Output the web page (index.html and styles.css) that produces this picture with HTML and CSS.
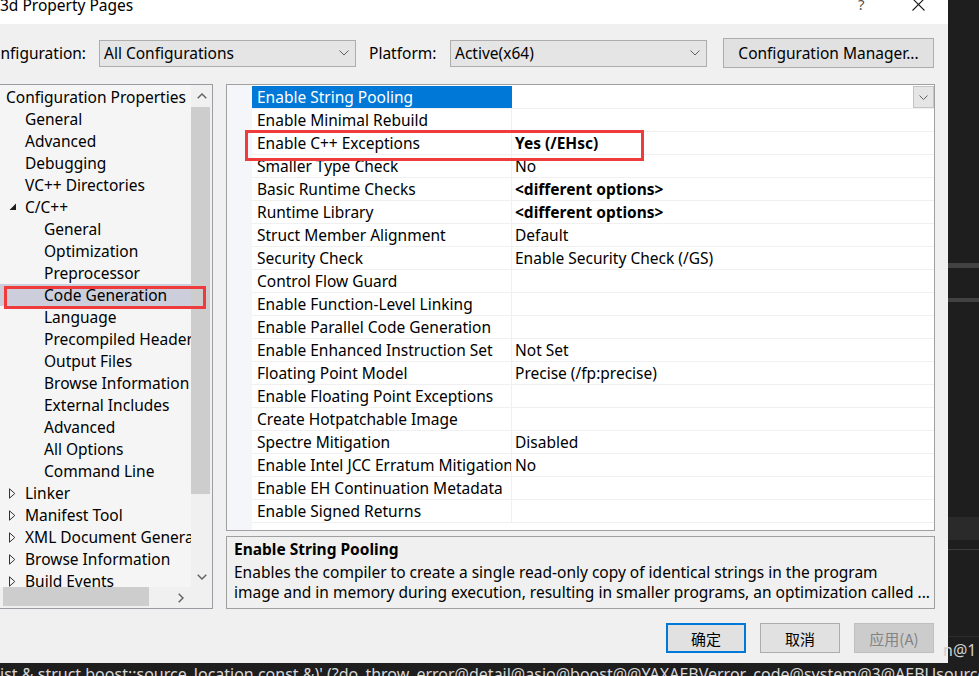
FILE: index.html
```html
<!DOCTYPE html>
<html>
<head>
<meta charset="utf-8">
<title>Property Pages</title>
<link rel="stylesheet" href="styles.css">
</head>
<body>
<div class="screen">
  <div class="dialog">
    <div class="titlebar">
      <span class="title">3d Property Pages</span>
      <span class="help">?</span>
      <svg class="close" width="13" height="13" viewBox="0 0 13 13"><path d="M0.5 0.5L12.5 12.5M12.5 0.5L0.5 12.5" stroke="#1a1a1a" stroke-width="1.1" fill="none"/></svg>
    </div>

    <div class="toolbar">
      <div class="lbl cfg-lbl">Configuration:</div>
      <div class="combo combo-cfg"><span>All Configurations</span><svg class="chev" width="10" height="6" viewBox="0 0 10 6"><path d="M0.5 0.5L5 5L9.5 0.5" fill="none" stroke="#606060"/></svg></div>
      <div class="lbl plat-lbl">Platform:</div>
      <div class="combo combo-plat"><span>Active(x64)</span><svg class="chev" width="10" height="6" viewBox="0 0 10 6"><path d="M0.5 0.5L5 5L9.5 0.5" fill="none" stroke="#606060"/></svg></div>
      <div class="btn btn-cm">Configuration Manager...</div>
    </div>

    <div class="main">
      <div class="tree">
        <div class="tree-body">
          <div class="tree-list">
            <div class="node l0">Configuration Properties</div>
            <div class="node l1"><span class="tw"></span>General</div>
            <div class="node l1"><span class="tw"></span>Advanced</div>
            <div class="node l1"><span class="tw"></span>Debugging</div>
            <div class="node l1"><span class="tw"></span>VC++ Directories</div>
            <div class="node l1"><span class="tw"><svg width="8" height="8" viewBox="0 0 8 8"><path d="M7 0.5L7 7L0.5 7Z" fill="#1e1e1e"/></svg></span>C/C++</div>
            <div class="node l2"><span class="tw"></span>General</div>
            <div class="node l2"><span class="tw"></span>Optimization</div>
            <div class="node l2"><span class="tw"></span>Preprocessor</div>
            <div class="node l2 sel"><span class="tw"></span>Code Generation</div>
            <div class="node l2"><span class="tw"></span>Language</div>
            <div class="node l2"><span class="tw"></span>Precompiled Headers</div>
            <div class="node l2"><span class="tw"></span>Output Files</div>
            <div class="node l2"><span class="tw"></span>Browse Information</div>
            <div class="node l2"><span class="tw"></span>External Includes</div>
            <div class="node l2"><span class="tw"></span>Advanced</div>
            <div class="node l2"><span class="tw"></span>All Options</div>
            <div class="node l2"><span class="tw"></span>Command Line</div>
            <div class="node l1"><span class="tw"><svg width="7" height="11" viewBox="0 0 7 11"><path d="M0.5 0.8L5.8 5.5L0.5 10.2Z" fill="none" stroke="#333"/></svg></span>Linker</div>
            <div class="node l1"><span class="tw"><svg width="7" height="11" viewBox="0 0 7 11"><path d="M0.5 0.8L5.8 5.5L0.5 10.2Z" fill="none" stroke="#333"/></svg></span>Manifest Tool</div>
            <div class="node l1"><span class="tw"><svg width="7" height="11" viewBox="0 0 7 11"><path d="M0.5 0.8L5.8 5.5L0.5 10.2Z" fill="none" stroke="#333"/></svg></span>XML Document Generator</div>
            <div class="node l1"><span class="tw"><svg width="7" height="11" viewBox="0 0 7 11"><path d="M0.5 0.8L5.8 5.5L0.5 10.2Z" fill="none" stroke="#333"/></svg></span>Browse Information</div>
            <div class="node l1"><span class="tw"><svg width="7" height="11" viewBox="0 0 7 11"><path d="M0.5 0.8L5.8 5.5L0.5 10.2Z" fill="none" stroke="#333"/></svg></span>Build Events</div>
          </div>
          <div class="vscroll">
            <div class="sarrow"><svg width="10" height="6" viewBox="0 0 10 6"><path d="M0.7 5.3L5 1L9.3 5.3" fill="none" stroke="#606060" stroke-width="1.4"/></svg></div>
            <div class="vthumb"></div>
            <div class="vtrack"></div>
            <div class="sarrow"><svg width="10" height="6" viewBox="0 0 10 6"><path d="M0.7 0.7L5 5L9.3 0.7" fill="none" stroke="#606060" stroke-width="1.4"/></svg></div>
          </div>
        </div>
        <div class="hscroll">
          <div class="hthumb"></div>
          <div class="htrack"></div>
          <div class="harrow"><svg width="6" height="10" viewBox="0 0 6 10"><path d="M0.7 0.7L5 5L0.7 9.3" fill="none" stroke="#606060" stroke-width="1.4"/></svg></div>
          <div class="corner"></div>
        </div>
        <div class="mark mark-tree"></div>
      </div>

      <div class="right">
        <div class="grid">
          <div class="gutter"></div>
          <div class="rows">
            <div class="row"><div class="name sel">Enable String Pooling</div><div class="val drop"><span class="dd"><svg width="9" height="5" viewBox="0 0 9 5"><path d="M0.5 0.5L4.5 4.5L8.5 0.5" fill="none" stroke="#606060"/></svg></span></div></div>
            <div class="row"><div class="name">Enable Minimal Rebuild</div><div class="val"></div></div>
            <div class="row"><div class="name">Enable C++ Exceptions</div><div class="val b">Yes (/EHsc)</div></div>
            <div class="row"><div class="name">Smaller Type Check</div><div class="val">No</div></div>
            <div class="row"><div class="name">Basic Runtime Checks</div><div class="val b">&lt;different options&gt;</div></div>
            <div class="row"><div class="name">Runtime Library</div><div class="val b">&lt;different options&gt;</div></div>
            <div class="row"><div class="name">Struct Member Alignment</div><div class="val">Default</div></div>
            <div class="row"><div class="name">Security Check</div><div class="val">Enable Security Check (/GS)</div></div>
            <div class="row"><div class="name">Control Flow Guard</div><div class="val"></div></div>
            <div class="row"><div class="name">Enable Function-Level Linking</div><div class="val"></div></div>
            <div class="row"><div class="name">Enable Parallel Code Generation</div><div class="val"></div></div>
            <div class="row"><div class="name">Enable Enhanced Instruction Set</div><div class="val">Not Set</div></div>
            <div class="row"><div class="name">Floating Point Model</div><div class="val">Precise (/fp:precise)</div></div>
            <div class="row"><div class="name">Enable Floating Point Exceptions</div><div class="val"></div></div>
            <div class="row"><div class="name">Create Hotpatchable Image</div><div class="val"></div></div>
            <div class="row"><div class="name">Spectre Mitigation</div><div class="val">Disabled</div></div>
            <div class="row"><div class="name">Enable Intel JCC Erratum Mitigation</div><div class="val">No</div></div>
            <div class="row"><div class="name">Enable EH Continuation Metadata</div><div class="val"></div></div>
            <div class="row"><div class="name">Enable Signed Returns</div><div class="val"></div></div>
          </div>
          <div class="mark mark-grid"></div>
        </div>
        <div class="desc">
          <div class="desc-title">Enable String Pooling</div>
          <div class="desc-line">Enables the compiler to create a single read-only copy of identical strings in the program</div>
          <div class="desc-line">image and in memory during execution, resulting in smaller programs, an optimization called ...</div>
        </div>
      </div>
    </div>

    <div class="buttons">
      <div class="btn dlg default">确定</div>
      <div class="btn dlg">取消</div>
      <div class="btn dlg disabled">应用(A)</div>
    </div>
  </div>

  <div class="side">
    <div class="sp sp1"></div>
    <div class="sl sl-a"></div>
    <div class="sp sp2"></div>
    <div class="sl sl-b"></div>
    <div class="sp sp3"></div>
    <div class="sband"></div>
    <div class="sp sp4"></div>
    <div class="sl sl-c"></div>
    <div class="sp sp5"></div>
    <div class="sl sl-d"></div>
    <div class="sp sp6"></div>
    <div class="side-text">n@1</div>
  </div>

  <div class="console">ist &amp;,struct boost::source_location const &amp;)' (?do_throw_error@detail@asio@boost@@YAXAEBVerror_code@system@3@AEBUsource_location@boost@@@Z)</div>
</div>
</body>
</html>
```

FILE: styles.css
```css
* { box-sizing: border-box; margin: 0; padding: 0; }

html, body {
  width: 979px;
  height: 676px;
  overflow: hidden;
  background: #1e1e1e;
}

body {
  font-family: "Noto Sans", "Noto Sans CJK SC", sans-serif;
  font-size: 15.5px;
  color: #000;
}

.screen {
  display: grid;
  grid-template-columns: 948px 31px;
  grid-template-rows: 663px 13px;
  width: 979px;
  height: 676px;
  overflow: hidden;
}

/* ---------- dialog ---------- */
.dialog {
  grid-column: 1;
  grid-row: 1;
  background: #f0f0f0;
  display: flex;
  flex-direction: column;
  overflow: hidden;
}

.titlebar {
  height: 24px;
  flex: 0 0 24px;
  background: #fff;
  display: flex;
  align-items: flex-start;
  padding-right: 23px;
}

.title {
  font-size: 15.5px;
  line-height: 15px;
  margin-top: -2px;
  white-space: nowrap;
  color: #000;
}

.help {
  margin-left: auto;
  font-size: 15px;
  line-height: 15px;
  margin-top: -3px;
  color: #555;
  width: 8px;
}

.close {
  margin-left: 46px;
  margin-top: -2px;
}

.toolbar {
  height: 44px;
  flex: 0 0 44px;
  padding-top: 14px;
  display: flex;
  align-items: center;
}

.lbl {
  white-space: nowrap;
  display: flex;
  justify-content: flex-end;
  line-height: 20px;
}

.cfg-lbl { width: 86px; }

.plat-lbl {
  margin-left: 13px;
  width: 71px;
  justify-content: flex-start;
}

.combo {
  height: 27px;
  width: 257px;
  background: #e5e5e5;
  border: 1px solid #adadad;
  display: flex;
  align-items: center;
  padding: 0 6px 0 4px;
  white-space: nowrap;
}

.combo span { flex: 1; }

.combo-cfg { margin-left: 13px; }
.combo-plat { margin-left: 10px; }

.chev { flex: 0 0 auto; }

.btn {
  background: #e1e1e1;
  border: 1px solid #adadad;
  display: flex;
  align-items: center;
  justify-content: center;
  white-space: nowrap;
}

.btn-cm {
  margin-left: 16px;
  width: 211px;
  height: 30px;
}

/* ---------- main area ---------- */
.main {
  flex: 0 0 525px;
  height: 525px;
  margin-top: 16px;
  display: flex;
}

.tree {
  position: relative;
  margin-left: -2px;
  width: 215px;
  height: 525px;
  border: 1px solid #9a9ca2;
  background: #f5f5f5;
  display: flex;
  flex-direction: column;
}

.tree-body {
  height: 502px;
  display: flex;
}

.tree-list {
  width: 192px;
  height: 502px;
  overflow: hidden;
  padding-top: 1px;
  background: #f5f5f5;
}

.node {
  height: 22px;
  line-height: 22px;
  white-space: nowrap;
  display: flex;
  align-items: center;
}

.node.l0 { padding-left: 7px; }
.node.l1 { padding-left: 7px; }
.node.l2 { padding-left: 26px; }
.node.sel { background: #cccedb; }

.tw {
  flex: 0 0 19px;
  width: 19px;
  height: 22px;
  display: flex;
  align-items: center;
  padding-left: 3px;
}

.vscroll {
  width: 21px;
  height: 502px;
  background: #f0f0f0;
  display: flex;
  flex-direction: column;
}

.sarrow {
  height: 21px;
  flex: 0 0 21px;
  display: flex;
  align-items: center;
  justify-content: center;
}

.vthumb {
  margin-top: 1px;
  height: 387px;
  width: 19px;
  background: #cdcdcd;
}

.vtrack { flex: 1; }

.hscroll {
  height: 21px;
  display: flex;
  background: #f0f0f0;
}

.hthumb {
  margin-left: 4px;
  margin-top: 0;
  width: 146px;
  height: 19px;
  background: #cdcdcd;
}

.htrack { flex: 1; }

.harrow {
  width: 21px;
  display: flex;
  align-items: center;
  justify-content: center;
}

.corner {
  width: 21px;
  background: #f0f0f0;
}

.mark {
  position: absolute;
  border: 3px solid #ef3b3b;
  pointer-events: none;
}

.mark-tree {
  left: 5px;
  top: 201px;
  width: 202px;
  height: 23px;
}

.right {
  margin-left: 13px;
  width: 709px;
  display: flex;
  flex-direction: column;
}

.grid {
  position: relative;
  height: 447px;
  border: 1px solid #a0a0a0;
  background: #fff;
  display: flex;
  padding-top: 1px;
}

.gutter {
  width: 25px;
  background: #f4f6f9;
  margin-top: -1px;
}

.rows {
  flex: 1;
}

.row {
  display: grid;
  grid-template-columns: 260px 1fr;
  height: 23px;
  border-bottom: 1px solid #f0f0f0;
}

.name {
  padding-left: 5px;
  line-height: 22px;
  white-space: nowrap;
  overflow: hidden;
  border-right: 1px solid #f0f0f0;
}

.name.sel {
  background: #0078d7;
  color: #fff;
  border-right-color: #0078d7;
}

.val {
  padding-left: 3px;
  line-height: 22px;
  white-space: nowrap;
  overflow: hidden;
}

.val.b { font-weight: bold; }

.val.drop {
  display: flex;
  justify-content: flex-end;
  padding: 0;
}

.dd {
  width: 21px;
  height: 22px;
  background: #e5e5e5;
  border: 1px solid #c4c4c4;
  display: flex;
  align-items: center;
  justify-content: center;
}

.mark-grid {
  left: 18px;
  top: 45px;
  width: 399px;
  height: 31px;
}

.desc {
  margin-top: 5px;
  height: 73px;
  border: 1px solid #a0a0a0;
  background: #f0f0f0;
  padding: 2px 0 0 7px;
}

.desc-title {
  font-weight: bold;
  line-height: 20px;
  margin-bottom: 3px;
}

.desc-line {
  line-height: 20px;
  white-space: nowrap;
}

.buttons {
  margin-top: 14px;
  display: flex;
  justify-content: flex-end;
  gap: 14px;
  padding-right: 14px;
}

.btn.dlg {
  width: 80px;
  height: 30px;
  font-family: "Noto Sans CJK SC", "Noto Sans", sans-serif;
  font-size: 15px;
}

.btn.default {
  border: 2px solid #0078d7;
}

.btn.disabled {
  background: #cccccc;
  border-color: #bfbfbf;
  color: #838383;
}

/* ---------- background editor ---------- */
.side {
  grid-column: 2;
  grid-row: 1;
  background: #1e1e1e;
  display: flex;
  flex-direction: column;
}

.sp1 { height: 263px; }
.sp2 { height: 30px; }
.sp3 { height: 215px; }
.sp4 { height: 9px; }
.sp5 { height: 86px; }
.sp6 { height: 6px; }

.sl-a { height: 5px; background: #424242; }
.sl-b { height: 4px; background: #424242; }
.sl-c { height: 1px; background: #3c3c3c; }
.sl-d { height: 1px; background: #2c2c2c; }

.sband { height: 23px; background: #2a2a2a; }

.side-text {
  margin-left: -5px;
  color: #cfcfcf;
  font-size: 16px;
  line-height: 15px;
  white-space: nowrap;
}

.console {
  grid-column: 1 / 3;
  grid-row: 2;
  color: #d8d8d8;
  font-size: 16px;
  line-height: 15px;
  padding-top: 4px;
  white-space: nowrap;
  overflow: hidden;
}
```
